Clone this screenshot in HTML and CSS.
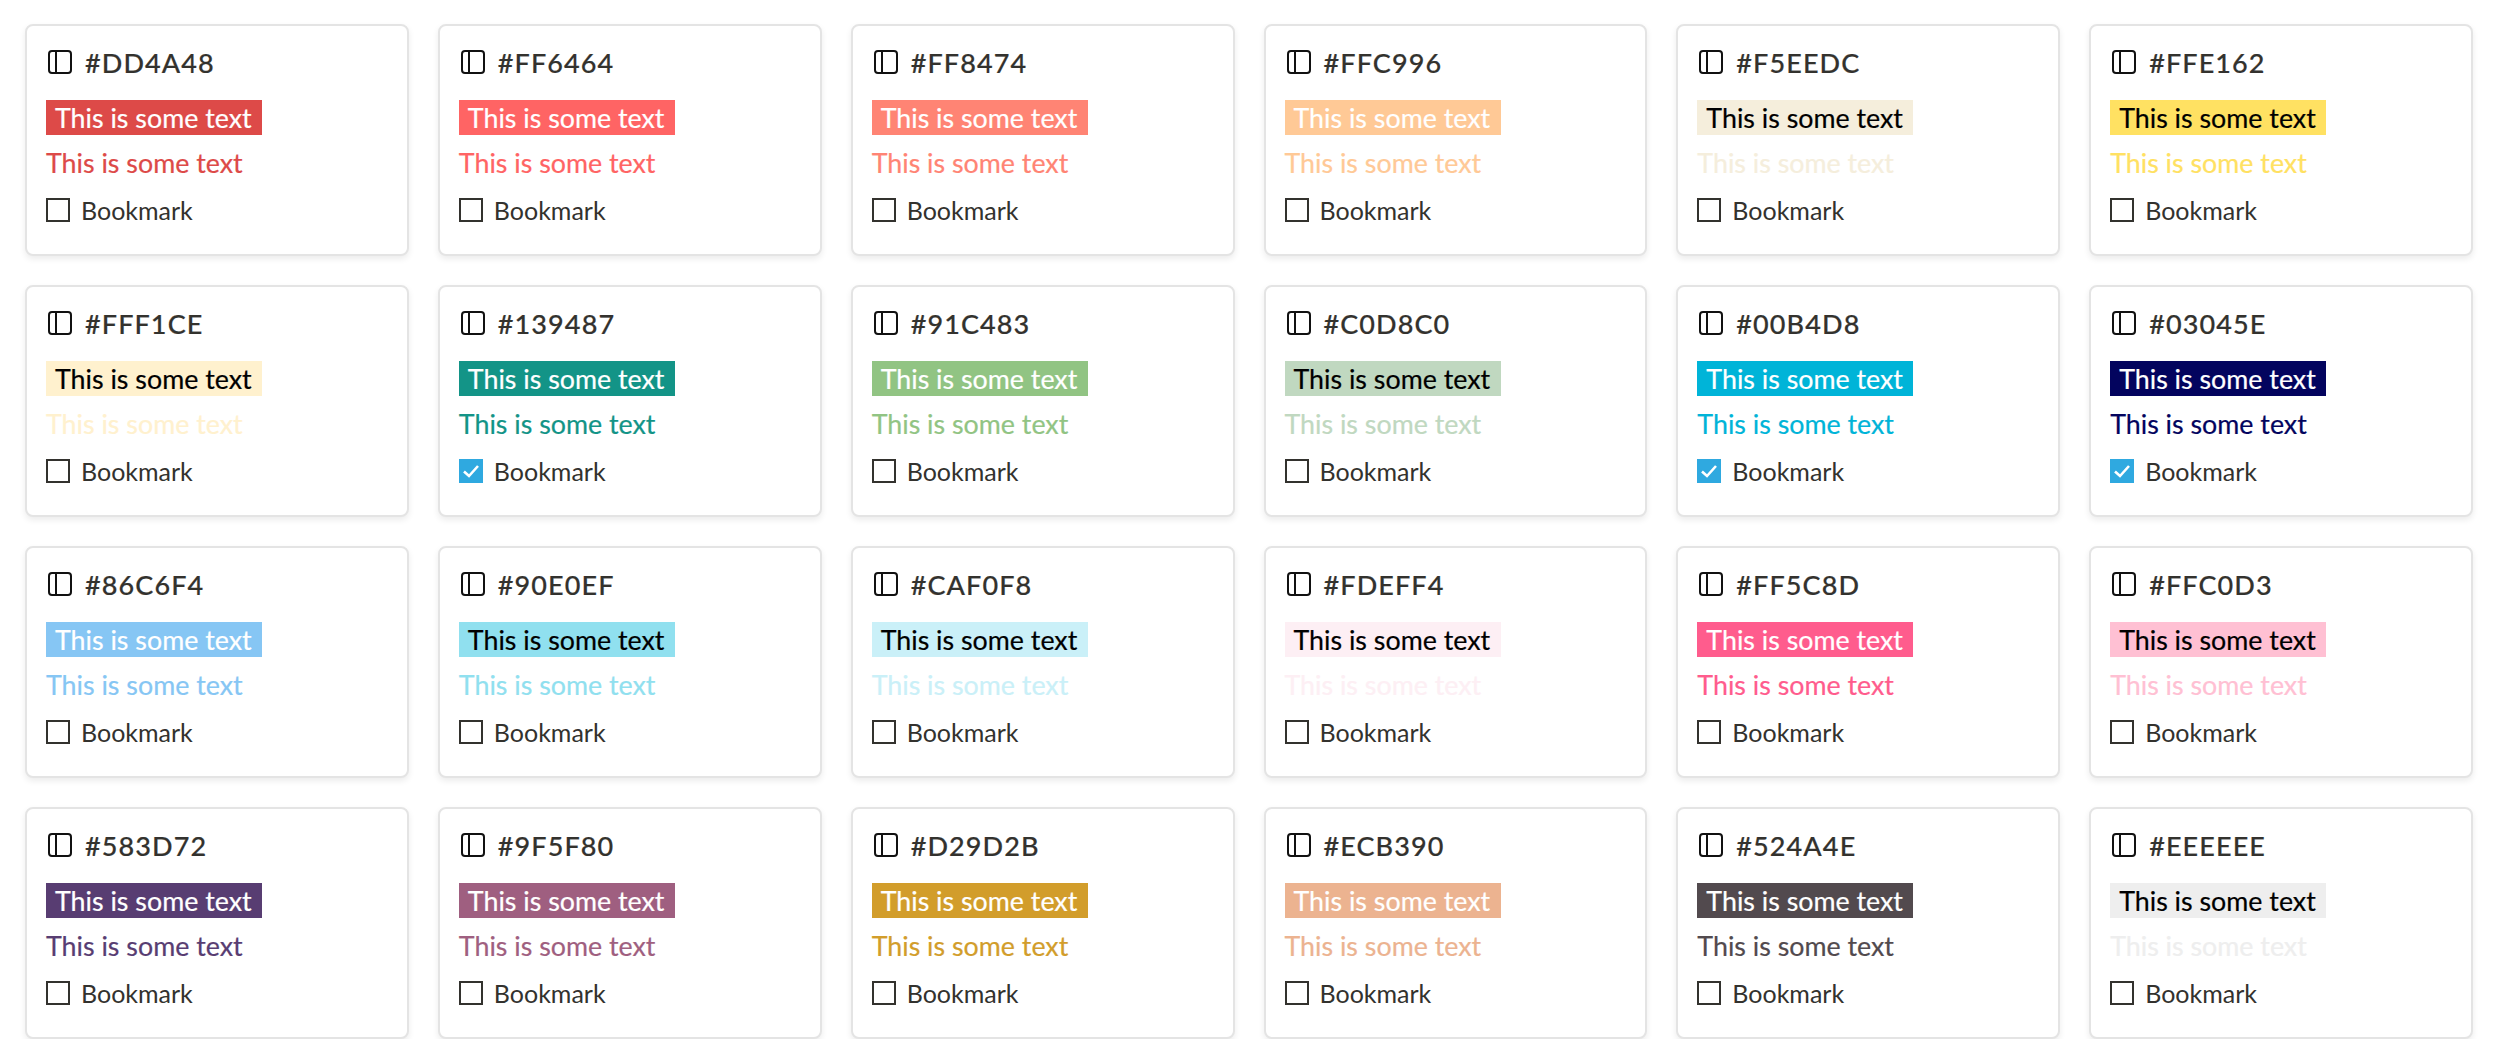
FILE: index.html
```html
<!DOCTYPE html>
<html lang="en">
<head>
    <meta charset="UTF-8">
    <title>Colors</title>
    <link rel="stylesheet" href="styles.css">
</head>
<body>
    <div class="grid">
        <div class="card" style="--c:#DD4A48"><h3 class="title"><i class="icon"></i>#DD4A48</h3><p class="badge light">This is some text</p><p class="plain">This is some text</p><label class="mark"><span class="box"></span>Bookmark</label></div>
        <div class="card" style="--c:#FF6464"><h3 class="title"><i class="icon"></i>#FF6464</h3><p class="badge light">This is some text</p><p class="plain">This is some text</p><label class="mark"><span class="box"></span>Bookmark</label></div>
        <div class="card" style="--c:#FF8474"><h3 class="title"><i class="icon"></i>#FF8474</h3><p class="badge light">This is some text</p><p class="plain">This is some text</p><label class="mark"><span class="box"></span>Bookmark</label></div>
        <div class="card" style="--c:#FFC996"><h3 class="title"><i class="icon"></i>#FFC996</h3><p class="badge light">This is some text</p><p class="plain">This is some text</p><label class="mark"><span class="box"></span>Bookmark</label></div>
        <div class="card" style="--c:#F5EEDC"><h3 class="title"><i class="icon"></i>#F5EEDC</h3><p class="badge">This is some text</p><p class="plain">This is some text</p><label class="mark"><span class="box"></span>Bookmark</label></div>
        <div class="card" style="--c:#FFE162"><h3 class="title"><i class="icon"></i>#FFE162</h3><p class="badge">This is some text</p><p class="plain">This is some text</p><label class="mark"><span class="box"></span>Bookmark</label></div>

        <div class="card" style="--c:#FFF1CE"><h3 class="title"><i class="icon"></i>#FFF1CE</h3><p class="badge">This is some text</p><p class="plain">This is some text</p><label class="mark"><span class="box"></span>Bookmark</label></div>
        <div class="card" style="--c:#139487"><h3 class="title"><i class="icon"></i>#139487</h3><p class="badge light">This is some text</p><p class="plain">This is some text</p><label class="mark"><span class="box checked"><svg viewBox="0 0 24 24"><path d="M5 12.5l5 4.5 9-10"/></svg></span>Bookmark</label></div>
        <div class="card" style="--c:#91C483"><h3 class="title"><i class="icon"></i>#91C483</h3><p class="badge light">This is some text</p><p class="plain">This is some text</p><label class="mark"><span class="box"></span>Bookmark</label></div>
        <div class="card" style="--c:#C0D8C0"><h3 class="title"><i class="icon"></i>#C0D8C0</h3><p class="badge">This is some text</p><p class="plain">This is some text</p><label class="mark"><span class="box"></span>Bookmark</label></div>
        <div class="card" style="--c:#00B4D8"><h3 class="title"><i class="icon"></i>#00B4D8</h3><p class="badge light">This is some text</p><p class="plain">This is some text</p><label class="mark"><span class="box checked"><svg viewBox="0 0 24 24"><path d="M5 12.5l5 4.5 9-10"/></svg></span>Bookmark</label></div>
        <div class="card" style="--c:#03045E"><h3 class="title"><i class="icon"></i>#03045E</h3><p class="badge light">This is some text</p><p class="plain">This is some text</p><label class="mark"><span class="box checked"><svg viewBox="0 0 24 24"><path d="M5 12.5l5 4.5 9-10"/></svg></span>Bookmark</label></div>

        <div class="card" style="--c:#86C6F4"><h3 class="title"><i class="icon"></i>#86C6F4</h3><p class="badge light">This is some text</p><p class="plain">This is some text</p><label class="mark"><span class="box"></span>Bookmark</label></div>
        <div class="card" style="--c:#90E0EF"><h3 class="title"><i class="icon"></i>#90E0EF</h3><p class="badge">This is some text</p><p class="plain">This is some text</p><label class="mark"><span class="box"></span>Bookmark</label></div>
        <div class="card" style="--c:#CAF0F8"><h3 class="title"><i class="icon"></i>#CAF0F8</h3><p class="badge">This is some text</p><p class="plain">This is some text</p><label class="mark"><span class="box"></span>Bookmark</label></div>
        <div class="card" style="--c:#FDEFF4"><h3 class="title"><i class="icon"></i>#FDEFF4</h3><p class="badge">This is some text</p><p class="plain">This is some text</p><label class="mark"><span class="box"></span>Bookmark</label></div>
        <div class="card" style="--c:#FF5C8D"><h3 class="title"><i class="icon"></i>#FF5C8D</h3><p class="badge light">This is some text</p><p class="plain">This is some text</p><label class="mark"><span class="box"></span>Bookmark</label></div>
        <div class="card" style="--c:#FFC0D3"><h3 class="title"><i class="icon"></i>#FFC0D3</h3><p class="badge">This is some text</p><p class="plain">This is some text</p><label class="mark"><span class="box"></span>Bookmark</label></div>

        <div class="card" style="--c:#583D72"><h3 class="title"><i class="icon"></i>#583D72</h3><p class="badge light">This is some text</p><p class="plain">This is some text</p><label class="mark"><span class="box"></span>Bookmark</label></div>
        <div class="card" style="--c:#9F5F80"><h3 class="title"><i class="icon"></i>#9F5F80</h3><p class="badge light">This is some text</p><p class="plain">This is some text</p><label class="mark"><span class="box"></span>Bookmark</label></div>
        <div class="card" style="--c:#D29D2B"><h3 class="title"><i class="icon"></i>#D29D2B</h3><p class="badge light">This is some text</p><p class="plain">This is some text</p><label class="mark"><span class="box"></span>Bookmark</label></div>
        <div class="card" style="--c:#ECB390"><h3 class="title"><i class="icon"></i>#ECB390</h3><p class="badge light">This is some text</p><p class="plain">This is some text</p><label class="mark"><span class="box"></span>Bookmark</label></div>
        <div class="card" style="--c:#524A4E"><h3 class="title"><i class="icon"></i>#524A4E</h3><p class="badge light">This is some text</p><p class="plain">This is some text</p><label class="mark"><span class="box"></span>Bookmark</label></div>
        <div class="card" style="--c:#EEEEEE"><h3 class="title"><i class="icon"></i>#EEEEEE</h3><p class="badge">This is some text</p><p class="plain">This is some text</p><label class="mark"><span class="box"></span>Bookmark</label></div>
    </div>
</body>
</html>
```

FILE: styles.css
```css
body {
    font-family: Lato, "Noto Sans", sans-serif;
    background-color: #fff;
    color: #33322e;
    margin: 0;
    padding: 0;
}
.grid {
    display: grid;
    grid-template-columns: repeat(6, 1fr);
    grid-auto-rows: 232px;
    gap: 29px;
    padding: 24px 27px 0 25px;
}
.card {
    box-sizing: border-box;
    border: 2px solid #e4e4e4;
    border-radius: 8px;
    box-shadow: 0 3px 6px rgba(0, 0, 0, 0.08);
    padding: 18px 18px 18px 19px;
    background-color: #fff;
}
.title {
    display: flex;
    align-items: center;
    gap: 13px;
    height: 24px;
    margin: 6px 0 0;
    font-size: 27px;
    font-weight: 500;
    letter-spacing: 1.1px;
    -webkit-text-stroke: 0.2px #33322e;
}
.icon {
    box-sizing: border-box;
    position: relative;
    width: 24px;
    height: 24px;
    margin-left: 2px;
    border: 2px solid #111;
    border-radius: 4px;
}
.icon::before {
    content: "";
    position: absolute;
    left: 5px;
    top: 0;
    bottom: 0;
    width: 2px;
    background-color: #111;
}
.badge {
    width: 216px;
    box-sizing: border-box;
    margin: 26px 0 0;
    padding: 0 0 0 9px;
    height: 35px;
    line-height: 36px;
    font-size: 26.8px;
    background-color: var(--c);
    color: #000;
    -webkit-text-stroke: 0.2px;
}
.badge.light {
    color: #fff;
}
.plain {
    margin: 10px 0 0;
    padding: 0;
    height: 35px;
    line-height: 36px;
    font-size: 26.8px;
    color: var(--c);
    -webkit-text-stroke: 0.2px;
}
.mark {
    display: flex;
    align-items: center;
    gap: 11px;
    margin-top: 15px;
    font-size: 25px;
}
.box {
    box-sizing: border-box;
    width: 24px;
    height: 24px;
    border: 2px solid #33322e;
}
.box.checked {
    border: 0;
    background-color: #2fa9e0;
}
.box svg {
    display: block;
    fill: none;
    stroke: #fff;
    stroke-width: 2.6;
}
```
